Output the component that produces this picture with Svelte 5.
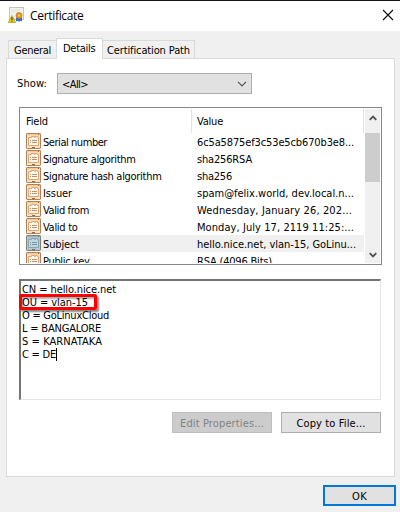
<script>
  const rows = [
    ['Serial number', 64, '6c5a5875ef3c53e5cb670b3e8...', 157],
    ['Signature algorithm', 92.5, 'sha256RSA', 55],
    ['Signature hash algorithm', 118.5, 'sha256', 35],
    ['Issuer', 29, 'spam@felix.world, dev.local.n...', 157],
    ['Valid from', 46, 'Wednesday, January 26, 202...', 155],
    ['Valid to', 34.5, 'Monday, July 17, 2119 11:25:...', 157],
    ['Subject', 36, 'hello.nice.net, vlan-15, GoLinu...', 159],
    ['Public key', 46.5, 'RSA (4096 Bits)', 75]
  ];
  const lines = [
    ['CN = hello.nice.net', 94],
    ['OU = vlan-15', 66],
    ['O = GoLinuxCloud', 87],
    ['L = BANGALORE', 79],
    ['S = KARNATAKA', 80],
    ['C = DE', 34]
  ];
  // Tracks a label out or in so that it fills the given width.
  function fit(node, width) {
    const natural = node.getBoundingClientRect().width;
    node.style.letterSpacing = `${(width - natural) / node.textContent.length}px`;
  }
</script>

{#snippet label(text, width)}<span class="label" use:fit={width}>{text}</span>{/snippet}

<div class="window">
  <header>
    <svg class="cert" width="16" height="16" viewBox="0 0 16 16">
      <rect x="1.5" y=".5" width="14" height="12" fill="#f1f1f0" stroke="#c9c3b4" />
      <path d="M3 3h10M3 5h6" stroke="#e3e1da" />
      <path d="M8 10.5v4l1.5-.7 1 .7h1l1-.7 1.5.7v-4z" fill="#2e6fd0" />
      <circle cx="11" cy="8.5" r="3" fill="#e09a20" stroke="#b87312" stroke-width=".6" />
      <circle cx="11" cy="8.5" r="1" fill="#f8d477" />
      <path d="M4 8.5L.3 15.5h7.4z" fill="#e9c91c" stroke="#b99a12" stroke-width=".7" />
      <path d="M4 10.2v2.8M4 13.6v1" stroke="#3c3511" />
    </svg>
    <h1>{@render label('Certificate', 53.5)}</h1>
    <svg class="close" width="12" height="12" viewBox="0 0 12 12"><path d="M1 1l10 10M11 1L1 11" stroke="#111" stroke-width="1.15" /></svg>
  </header>

  <nav>
    <div class="tab first">{@render label('General', 37)}</div>
    <div class="tab active">{@render label('Details', 32.5)}</div>
    <div class="tab last">{@render label('Certification Path', 83)}</div>
  </nav>

  <main>
    <div class="show">
      {@render label('Show:', 30)}
      <div class="select">
        {@render label('<All>', 26)}
        <svg width="10" height="6" viewBox="0 0 10 6"><path d="M1 .8l4 4 4-4" fill="none" stroke="#555" stroke-width="1.2" /></svg>
      </div>
    </div>

    <div class="list">
      <div class="table">
        <div class="head">
          <div class="field">{@render label('Field', 22)}</div>
          <div class="value">{@render label('Value', 26)}</div>
        </div>
        {#each rows as [field, fw, value, vw], i}
          <div class="row" class:selected={i === 6}>
            <svg width="15" height="16" viewBox="0 0 15 16">
              <rect x=".5" y=".5" width="14" height="15" rx=".6" fill={i === 6 ? '#aecbdc' : '#fde3c6'} stroke={i === 6 ? '#817f74' : '#b08058'} />
              <path d="M1 1.7h13" stroke={i === 6 ? '#a5b3b8' : '#fbc98c'} stroke-width="1.4" />
              <path d="M12 1.5h1M6 14.5h3" stroke={i === 6 ? '#77756b' : '#9b6336'} />
              <path d="M2.5 4.5h3v-1h3v1h1v-1h2v1h1v8h-10z" fill={i === 6 ? '#bdd6e2' : '#fff8ef'} stroke={i === 6 ? '#8ca6ad' : '#d9a477'} />
              <path d="M4 7.5h1M6 7.5h5M4 9.5h1M6 9.5h5" stroke={i === 6 ? '#7d979d' : '#c39064'} />
            </svg>
            <div class="fill">
              <div class="name">{@render label(field, fw)}</div>
              <div>{@render label(value, vw)}</div>
            </div>
          </div>
        {/each}
      </div>
      <div class="scroll">
        <svg width="8" height="6" viewBox="0 0 8 6"><path d="M.7 4.9L4 1.6l3.3 3.3" fill="none" stroke="#505050" stroke-width="1.8" /></svg>
        <div class="thumb"></div>
        <svg class="down" width="8" height="6" viewBox="0 0 8 6"><path d="M.7 1.1L4 4.4l3.3-3.3" fill="none" stroke="#505050" stroke-width="1.8" /></svg>
      </div>
    </div>

    <div class="detail">
      {#each lines as [text, w], i}
        <div class="line">{@render label(text, w)}{#if i === 5}<i class="caret"></i>{/if}</div>
      {/each}
      <div class="mark"></div>
    </div>

    <div class="actions">
      <div class="button disabled">{@render label('Edit Properties...', 84)}</div>
      <div class="button">{@render label('Copy to File...', 69)}</div>
    </div>
  </main>

  <footer><div class="button ok">{@render label('OK', 15)}</div></footer>
</div>

<style>
  :global(body) { margin: 0; }
  .window, .window :global(*) { box-sizing: border-box; }
  .window {
    width: 400px; height: 512px; overflow: hidden; background: #f0f0f0;
    border-top: 1px solid #151515; color: #000;
    font: 11px/13px "DejaVu Sans Condensed", "DejaVu Sans", sans-serif;
    font-stretch: condensed;
  }
  .label { white-space: nowrap; display: inline-block; }
  svg { display: block; flex: none; }
  header { height: 30px; background: #fff; display: flex; align-items: center; padding: 0 6px 0 8px; }
  .cert { margin-top: -2px; }
  h1 { margin: 0 auto 0 6px; font: 12px/16px "Open Sans", "Noto Sans", sans-serif; }
  .close { margin-top: -2px; }
  nav { display: flex; align-items: flex-end; height: 28px; padding-left: 8px; position: relative; z-index: 1; }
  .tab { height: 19px; border: 1px solid #d9d9d9; padding-top: 3px; display: flex; }
  .first { width: 48px; padding-left: 5px; border-right: 0; }
  .active { width: 47px; height: 21px; padding-left: 6px; background: #fff; border-bottom: 0; }
  .last { width: 92px; padding-left: 4px; border-left: 0; }
  main {
    margin: -1px 5px 0 6px; height: 419px; background: #fff;
    border: 1px solid #dadada; padding: 14px 12px 0;
  }
  .show { display: flex; align-items: center; height: 21px; margin-left: -2px; }
  .select {
    margin-left: 10px; width: 195px; height: 21px; background: #e1e1e1; border: 1px solid #adadad;
    display: flex; align-items: center; justify-content: space-between; padding: 1px 4px 0;
  }
  .list { margin-top: 13px; width: 363px; height: 158px; border: 1px solid #828790; padding: 1px; display: flex; overflow: hidden; }
  .table { width: 344px; height: 154px; overflow: hidden; }
  .head { display: flex; height: 24px; margin-right: 1px; border-right: 1px solid #e2e2e2; line-height: 25px; }
  .field { width: 171px; padding-left: 5px; border-right: 1px solid #e2e2e2; }
  .value { padding-left: 5px; }
  .row { display: flex; height: 17px; padding: 0 1px 0 5px; }
  .fill { display: flex; flex: 1; padding-left: 2px; line-height: 19px; }
  .name { width: 154px; }
  .selected .fill { background: #f0f0f0; }
  .scroll { width: 15px; background: #f0f0f0; display: flex; flex-direction: column; align-items: center; padding: 6px 0 5px; }
  .thumb { width: 15px; height: 49px; background: #cdcdcd; margin-top: 12px; }
  .down { margin-top: auto; }
  .detail {
    position: relative; margin-top: 14px; width: 362px; height: 121px; padding: 2px 0 0 1px;
    border: 1px solid #e3e3e3; border-top: 2px solid #747474; border-left: 2px solid #747474;
    display: flex; flex-direction: column;
  }
  .line { display: flex; height: 13px; }
  .caret { width: 1px; height: 13px; background: #000; }
  .mark {
    position: absolute; left: -2px; top: 13px; width: 78px; height: 16px;
    border: 3px solid #f00; border-radius: 2px; box-shadow: 2px 2px 2px #0007, inset 2px 2px 2px #0005;
  }
  .actions { display: flex; gap: 9px; margin: 12px 0 0 153px; }
  .button {
    width: 100px; height: 21px; background: #e1e1e1; border: 1px solid #adadad;
    display: flex; align-items: center; justify-content: center; padding-top: 1px;
  }
  .disabled { background: #ccc; border-color: #bfbfbf; color: #838383; }
  footer { display: flex; justify-content: flex-end; padding: 8px 4px 0; }
  .ok { width: 73px; border: 2px solid #0078d7; }
</style>
